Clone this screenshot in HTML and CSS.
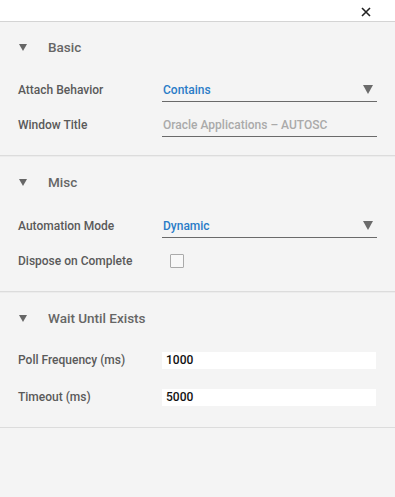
FILE: index.html
```html
<!DOCTYPE html>
<html>
<head>
<meta charset="utf-8">
<link rel="stylesheet" href="styles.css">
</head>
<body>
<div class="topbar">
  <svg class="close" width="10" height="10" viewBox="0 0 10 10"><path d="M1 1L9 9M9 1L1 9" stroke="#222" stroke-width="1.6"/></svg>
</div>
<div class="section first">
  <div class="header"><span class="caret"></span><span class="title">Basic</span></div>
  <div class="rows">
    <div class="row"><span class="label">Attach Behavior</span><div class="field select"><span class="value">Contains</span><span class="arrow"></span></div></div>
    <div class="row"><span class="label">Window Title</span><div class="field"><span class="placeholder">Oracle Applications – AUTOSC</span></div></div>
  </div>
</div>
<div class="section">
  <div class="header"><span class="caret"></span><span class="title">Misc</span></div>
  <div class="rows">
    <div class="row"><span class="label">Automation Mode</span><div class="field select"><span class="value">Dynamic</span><span class="arrow"></span></div></div>
    <div class="row"><span class="label">Dispose on Complete</span><div class="check-wrap"><span class="checkbox"></span></div></div>
  </div>
</div>
<div class="section wait">
  <div class="header"><span class="caret"></span><span class="title">Wait Until Exists</span></div>
  <div class="rows">
    <div class="row"><span class="label">Poll Frequency (ms)</span><div class="input"><span>1000</span></div></div>
    <div class="row"><span class="label">Timeout (ms)</span><div class="input"><span>5000</span></div></div>
  </div>
</div>
</body>
</html>
```
FILE: styles.css
```css
html, body {
  margin: 0;
  padding: 0;
  background: #f4f4f4;
  font-family: Roboto, "Liberation Sans", sans-serif;
}
.topbar {
  height: 21px;
  background: #fff;
  border-bottom: 1px solid #d4d4d4;
  display: flex;
  justify-content: flex-end;
  align-items: center;
  padding-right: 24px;
}
.close { display: block; margin-top: 2px; }
.section {
  border-bottom: 1px solid #dcdcdc;
  box-shadow: 0 1px 0 #ececec;
  padding-bottom: 18px;
}
.header {
  height: 52px;
  display: flex;
  align-items: center;
  padding-left: 19px;
}
.first .header { height: 50px; }
.caret {
  width: 0; height: 0;
  border-left: 4px solid transparent;
  border-right: 4px solid transparent;
  border-top: 7px solid #666;
  margin-right: 21px;
}
.title {
  font-size: 13.5px;
  font-weight: 500;
  color: #666;
}
.rows {
  display: flex;
  flex-direction: column;
  gap: 11px;
  margin-top: 6px;
  padding: 0 18px;
}
.wait .rows { margin-top: 4px; gap: 13px; }
.wait { padding-bottom: 18px; }
.row {
  height: 24px;
  display: flex;
  align-items: center;
}
.label {
  width: 144px;
  flex: none;
  font-size: 12px;
  font-weight: 500;
  color: #5a5a5a;
}
.field {
  flex: 1;
  height: 24px;
  box-sizing: border-box;
  border-bottom: 1px solid #6a6a6a;
  display: flex;
  align-items: center;
  justify-content: space-between;
  padding-left: 1px;
  padding-right: 4px;
  font-size: 12px;
  font-weight: 500;
}
.value { color: #2a7cc7; }
.placeholder { color: #aaa; }
.arrow {
  width: 0; height: 0;
  border-left: 5px solid transparent;
  border-right: 5px solid transparent;
  border-top: 9px solid #6b6b6b;
}
.check-wrap { flex: 1; padding-left: 8px; display: flex; align-items: center; }
.checkbox {
  width: 12px; height: 12px;
  border: 1.5px solid #aaa;
  background: #f8f8f8;
  border-radius: 1px;
}
.input {
  flex: 1;
  height: 17px;
  margin-right: 1px;
  background: #fff;
  display: flex;
  align-items: center;
  padding-left: 4px;
  font-size: 12px;
  font-weight: 500;
  color: #111;
}
```
